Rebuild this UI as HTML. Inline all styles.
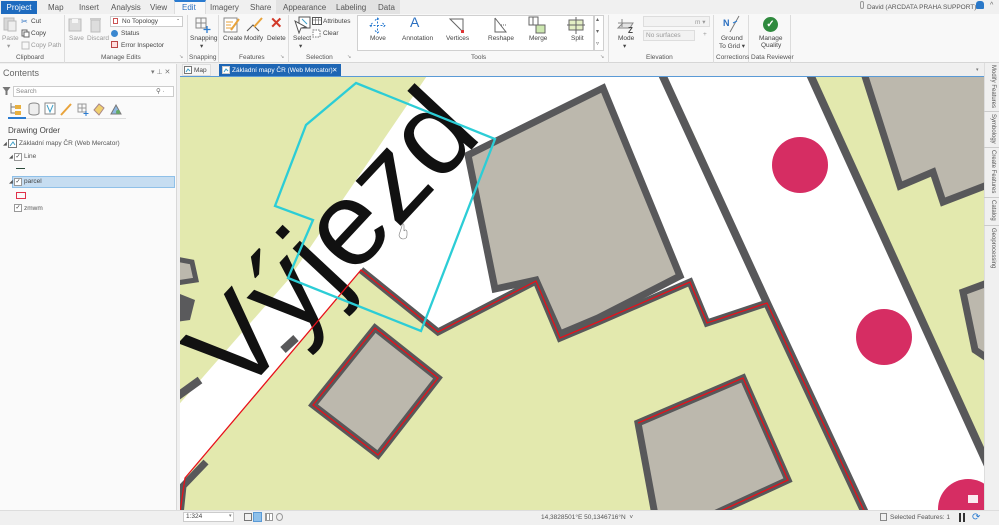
<!DOCTYPE html>
<html><head><meta charset="utf-8">
<style>
*{margin:0;padding:0;box-sizing:border-box}
body{width:999px;height:525px;overflow:hidden;background:#f0f0f0;font-family:"Liberation Sans",sans-serif;position:relative;color:#333}
.a{position:absolute;white-space:nowrap}
.t{font-size:8px;color:#555}
.s{font-size:6.5px;color:#444}
.g{font-size:6.5px;color:#555}
.dis{color:#9a9a9a}
.sep{position:absolute;top:15px;width:1px;height:48px;background:#dcdcdc}
.vt{position:absolute;font-size:6px;color:#555;transform-origin:0 0;transform:rotate(90deg);white-space:nowrap}
</style></head><body>
<div class="a" style="left:0;top:0;width:999px;height:14px;background:#f0f0f0"></div>
<div class="a" style="left:276px;top:0;width:124px;height:14px;background:#e2e2e2"></div>
<div class="a" style="left:1px;top:1px;width:36px;height:13px;background:#1e6bbf;color:#fff;font-size:8px;line-height:13px;text-align:center">Project</div>
<div class="a t" style="left:48px;top:3px">Map</div>
<div class="a t" style="left:79px;top:3px">Insert</div>
<div class="a t" style="left:111px;top:3px">Analysis</div>
<div class="a t" style="left:150px;top:3px">View</div>
<div class="a" style="left:174px;top:0;width:32px;height:15px;background:#f8f8f8;border-top:2px solid #2a7bd0;border-left:1px solid #ddd;border-right:1px solid #ddd"></div>
<div class="a t" style="left:182px;top:3px;color:#2a6fc0">Edit</div>
<div class="a t" style="left:210px;top:3px">Imagery</div>
<div class="a t" style="left:250px;top:3px">Share</div>
<div class="a t" style="left:283px;top:3px">Appearance</div>
<div class="a t" style="left:336px;top:3px">Labeling</div>
<div class="a t" style="left:378px;top:3px">Data</div>
<div class="a" style="left:860px;top:1px;width:4px;height:8px;border:1px solid #999;border-radius:2px"></div>
<div class="a" style="left:867px;top:3px;font-size:6.5px;color:#555">David (ARCDATA PRAHA SUPPORT) ▾</div>
<div class="a" style="left:976px;top:1px;width:8px;height:8px;background:#2a78c8;border-radius:3px 3px 1px 1px"></div>
<div class="a" style="left:990px;top:2px;font-size:7px;color:#666">^</div>
<div class="a" style="left:0;top:14px;width:999px;height:49px;background:#f8f8f8;border-bottom:1px solid #d6d6d6"></div>
<svg class="a" style="left:2px;top:16px" width="16" height="16"><rect x="2" y="2" width="10" height="12" fill="#d8d8d8" stroke="#bbb"/><rect x="6" y="5" width="8" height="10" fill="#eee" stroke="#bbb"/></svg>
<div class="a s dis" style="left:2px;top:35px">Paste</div>
<div class="a s dis" style="left:7px;top:42px">▾</div>
<div class="a" style="left:21px;top:17px;font-size:8px;color:#2a6fc0">✂</div><div class="a s" style="left:31px;top:18px">Cut</div>
<svg class="a" style="left:21px;top:29px" width="9" height="9"><rect x="1" y="1" width="5" height="6" fill="none" stroke="#666"/><rect x="3" y="3" width="5" height="5" fill="#fff" stroke="#666"/></svg><div class="a s" style="left:31px;top:30px">Copy</div>
<svg class="a" style="left:21px;top:41px" width="9" height="9"><rect x="1" y="1" width="7" height="7" fill="none" stroke="#bbb"/></svg><div class="a s dis" style="left:31px;top:42px">Copy Path</div>
<div class="sep" style="left:64px"></div>
<svg class="a" style="left:68px;top:17px" width="16" height="16"><rect x="1" y="2" width="12" height="12" fill="#ddd" stroke="#bbb"/><rect x="4" y="2" width="6" height="4" fill="#f6f6f6"/></svg>
<div class="a s dis" style="left:69px;top:35px">Save</div>
<svg class="a" style="left:89px;top:17px" width="14" height="16"><rect x="2" y="3" width="9" height="12" fill="#ddd" stroke="#bbb"/><rect x="1" y="1" width="11" height="2" fill="#ccc"/></svg>
<div class="a s dis" style="left:87px;top:35px">Discard</div>
<div class="a" style="left:110px;top:16px;width:73px;height:11px;background:#fff;border:1px solid #ccc"></div>
<div class="a" style="left:113px;top:18px;width:5px;height:6px;border:1px solid #c55"></div>
<div class="a s" style="left:122px;top:18px">No Topology</div><div class="a s" style="left:177px;top:16px">-</div>
<div class="a" style="left:111px;top:30px;width:7px;height:7px;border-radius:50%;background:#3a87cf"></div><div class="a s" style="left:121px;top:30px">Status</div>
<div class="a" style="left:111px;top:41px;width:7px;height:7px;border:1px solid #b44;background:#fdd"></div><div class="a s" style="left:121px;top:42px">Error Inspector</div>
<div class="sep" style="left:187px"></div>
<svg class="a" style="left:194px;top:16px" width="18" height="18"><path d="M2 2h10v10H2zM2 7h10M7 2v10" fill="none" stroke="#888"/><path d="M13 10v7M9.5 13.5h7" stroke="#2a7bd0" stroke-width="1.3"/></svg>
<div class="a s" style="left:190px;top:35px">Snapping</div><div class="a s" style="left:200px;top:42px">▾</div>
<div class="sep" style="left:218px"></div>
<svg class="a" style="left:223px;top:16px" width="18" height="18"><rect x="1" y="2" width="13" height="14" fill="#fff" stroke="#888"/><path d="M3 6h7M3 9h5M3 12h7" stroke="#e8a33b"/><path d="M8 14L16 3" stroke="#e8a33b" stroke-width="2"/></svg>
<div class="a s" style="left:223px;top:35px">Create</div>
<svg class="a" style="left:245px;top:16px" width="18" height="18"><path d="M2 15L8 9L14 15" fill="none" stroke="#555"/><path d="M9 11L17 2" stroke="#e8a33b" stroke-width="2"/></svg>
<div class="a s" style="left:244px;top:35px">Modify</div>
<div class="a" style="left:270px;top:14px;font-size:15px;color:#d23a2a;font-weight:bold">✕</div>
<div class="a s" style="left:267px;top:35px">Delete</div>
<div class="sep" style="left:288px"></div>
<svg class="a" style="left:293px;top:16px" width="18" height="18"><rect x="6" y="1" width="11" height="11" fill="#fff" stroke="#555"/><path d="M2 5l4 12 2-5 5-1z" fill="#fff" stroke="#555"/><path d="M9 3l5 5" stroke="#3fa0c8"/></svg>
<div class="a s" style="left:293px;top:35px">Select</div><div class="a s" style="left:299px;top:42px">▾</div>
<svg class="a" style="left:312px;top:17px" width="10" height="9"><rect x="0.5" y="0.5" width="9" height="7" fill="#fff" stroke="#555"/><path d="M1 3h8M3.5 1v7M6.5 1v7" stroke="#555" stroke-width=".6"/></svg>
<div class="a s" style="left:323px;top:18px">Attributes</div>
<svg class="a" style="left:312px;top:29px" width="10" height="9"><rect x="1" y="1" width="7" height="7" fill="#fff" stroke="#777" stroke-dasharray="1.5 1"/></svg>
<div class="a s" style="left:323px;top:30px">Clear</div>
<div class="a" style="left:357px;top:15px;width:237px;height:36px;background:#fff;border:1px solid #d0d0d0"></div>
<div class="a" style="left:594px;top:15px;width:10px;height:36px;background:#fff;border:1px solid #d0d0d0"></div>
<div class="a" style="left:596px;top:16px;font-size:6px;color:#666">▴</div>
<div class="a" style="left:596px;top:28px;font-size:6px;color:#666">▾</div>
<div class="a" style="left:596px;top:40px;font-size:6px;color:#666">▿</div>
<svg class="a" style="left:369px;top:17px" width="17" height="17"><path d="M8.5 1v15M1 8.5h15M6 3.5l2.5-2.5 2.5 2.5M6 13.5l2.5 2.5 2.5-2.5M3.5 6L1 8.5l2.5 2.5M13.5 6l2.5 2.5-2.5 2.5" fill="none" stroke="#2a7bd0" stroke-dasharray="2 1.5"/></svg>
<div class="a s" style="left:370px;top:35px">Move</div>
<div class="a" style="left:410px;top:14px;font-size:14px;color:#2a6fc0">A</div>
<div class="a s" style="left:402px;top:35px">Annotation</div>
<svg class="a" style="left:448px;top:17px" width="17" height="17"><path d="M2 2h13L15 15L2 2z" fill="none" stroke="#666"/><rect x="13" y="13" width="3" height="3" fill="#d33"/></svg>
<div class="a s" style="left:446px;top:35px">Vertices</div>
<svg class="a" style="left:492px;top:17px" width="17" height="17"><path d="M3 1v14h11L3 1" fill="none" stroke="#666"/><path d="M9 8l5 0" stroke="#666" stroke-dasharray="1 1"/></svg>
<div class="a s" style="left:488px;top:35px">Reshape</div>
<svg class="a" style="left:528px;top:16px" width="18" height="18"><rect x="1" y="1" width="9" height="8" fill="#fff" stroke="#666"/><path d="M5 1v8" stroke="#666"/><rect x="8" y="9" width="9" height="8" fill="#cde8b0" stroke="#666"/></svg>
<div class="a s" style="left:529px;top:35px">Merge</div>
<svg class="a" style="left:567px;top:16px" width="18" height="18"><rect x="2" y="4" width="14" height="10" fill="#e4efc4" stroke="#666"/><path d="M9 1v17M0 9h18" stroke="#666"/></svg>
<div class="a s" style="left:571px;top:35px">Split</div>
<div class="a g" style="left:471px;top:54px">Tools</div>
<div class="sep" style="left:608px"></div>
<svg class="a" style="left:616px;top:16px" width="20" height="18"><path d="M2 12l5-5h10l-3 5z" fill="#e4e4e4" stroke="#888"/><path d="M6 3v8M2 7h8" stroke="#888"/><text x="12" y="17" font-size="8" font-weight="bold" fill="#444" font-family="Liberation Sans">Z</text></svg>
<div class="a s" style="left:618px;top:35px">Mode</div><div class="a s" style="left:623px;top:42px">▾</div>
<div class="a" style="left:643px;top:16px;width:67px;height:11px;background:#f2f2f2;border:1px solid #ddd"></div>
<div class="a s dis" style="left:695px;top:18px">m ▾</div>
<div class="a" style="left:643px;top:30px;width:52px;height:11px;background:#f2f2f2;border:1px solid #ddd"></div>
<div class="a s dis" style="left:646px;top:32px">No surfaces</div>
<div class="a s dis" style="left:703px;top:31px">+</div>
<div class="sep" style="left:713px"></div>
<div class="a" style="left:723px;top:18px;font-size:9px;font-weight:bold;color:#2a6fc0">N</div>
<svg class="a" style="left:729px;top:15px" width="12" height="18"><path d="M1 17L10 1" stroke="#777"/><path d="M4 8l4-2" stroke="#2a7bd0"/></svg>
<div class="a s" style="left:721px;top:35px">Ground</div>
<div class="a s" style="left:719px;top:42px">To Grid ▾</div>
<div class="sep" style="left:748px"></div>
<div class="a" style="left:763px;top:17px;width:15px;height:15px;border-radius:50%;background:#2f8a3e;color:#fff;font-size:10px;line-height:15px;text-align:center;font-weight:bold">✓</div>
<div class="a s" style="left:759px;top:35px">Manage</div>
<div class="a s" style="left:761px;top:42px">Quality</div>
<div class="sep" style="left:790px"></div>
<div class="a g" style="left:16px;top:54px">Clipboard</div>
<div class="a g" style="left:101px;top:54px">Manage Edits</div>
<div class="a" style="left:179px;top:54px;font-size:5px;color:#888">↘</div>
<div class="a g" style="left:189px;top:54px">Snapping</div>
<div class="a g" style="left:239px;top:54px">Features</div>
<div class="a" style="left:280px;top:54px;font-size:5px;color:#888">↘</div>
<div class="a g" style="left:306px;top:54px">Selection</div>
<div class="a" style="left:347px;top:54px;font-size:5px;color:#888">↘</div>
<div class="a" style="left:600px;top:54px;font-size:5px;color:#888">↘</div>
<div class="a g" style="left:646px;top:54px">Elevation</div>
<div class="a g" style="left:716px;top:54px">Corrections</div>
<div class="a g" style="left:751px;top:54px">Data Reviewer</div>
<div class="a" style="left:0;top:64px;width:177px;height:446px;background:#fafafa;border-right:1px solid #d8d8d8"></div>
<div class="a" style="left:3px;top:68px;font-size:9px;color:#666">Contents</div>
<div class="a" style="left:151px;top:68px;font-size:7px;color:#777">▾ ⊥ ✕</div>
<svg class="a" style="left:2px;top:86px" width="9" height="10"><path d="M0.5 1h8L5.5 5v4H3.5V5z" fill="#777"/></svg>
<div class="a" style="left:13px;top:86px;width:161px;height:11px;background:#fff;border:1px solid #ccc"></div>
<div class="a s" style="left:16px;top:88px;color:#888">Search</div>
<div class="a s" style="left:156px;top:87px;color:#666">⚲ ·</div>
<svg class="a" style="left:8px;top:101px" width="120" height="16">
<path d="M3 2v10h4M3 6h4" fill="none" stroke="#777"/><rect x="7" y="4" width="6" height="4" fill="#e8b040"/><rect x="7" y="10" width="6" height="4" fill="#e8b040"/>
<ellipse cx="26" cy="4" rx="5" ry="2" fill="#eee" stroke="#888"/><path d="M21 4v8a5 2 0 0 0 10 0V4" fill="#eee" stroke="#888"/>
<rect x="37" y="2" width="10" height="11" fill="#fff" stroke="#888"/><path d="M39 4l3 7 3-7" fill="none" stroke="#3fa0c8"/>
<path d="M53 14L63 3" stroke="#e8a33b" stroke-width="2"/>
<path d="M70 3h8v8h-8zM74 3v8M70 7h8" fill="none" stroke="#999"/><path d="M78 10v5M75.5 12.5h5" stroke="#2a7bd0"/>
<path d="M86 9l5-6 5 4-5 7z" fill="#f0d070" stroke="#a88"/>
<path d="M103 13l5-9 5 9z" fill="#8fb8e0" stroke="#777"/><circle cx="110" cy="11" r="2" fill="#6a6"/>
</svg>
<div class="a" style="left:8px;top:117px;width:18px;height:2px;background:#2a7bd0"></div>
<div class="a" style="left:26px;top:118px;width:100px;height:1px;background:#ddd"></div>
<div class="a" style="left:8px;top:126px;font-size:8px;color:#444">Drawing Order</div>
<div class="a" style="left:3px;top:141px;font-size:5px;color:#555">◢</div>
<svg class="a" style="left:8px;top:139px" width="9" height="9"><rect x="0.5" y="0.5" width="8" height="8" fill="#fff" stroke="#777"/><path d="M2 7l3-4 2 3" fill="none" stroke="#3fa0c8"/></svg>
<div class="a s" style="left:19px;top:140px;color:#555">Základní mapy ČR (Web Mercator)</div>
<div class="a" style="left:9px;top:154px;font-size:5px;color:#555">◢</div>
<div class="a" style="left:14px;top:153px;width:8px;height:8px;border:1px solid #999;background:#fff;font-size:6px;line-height:7px;text-align:center;color:#333">✓</div>
<div class="a s" style="left:24px;top:153px;color:#555">Line</div>
<div class="a" style="left:16px;top:168px;width:9px;height:1px;background:#2c4a3a"></div>
<div class="a" style="left:12px;top:176px;width:163px;height:12px;background:#c6ddf1;border:1px solid #8fc0e8"></div>
<div class="a" style="left:9px;top:179px;font-size:5px;color:#555">◢</div>
<div class="a" style="left:14px;top:178px;width:8px;height:8px;border:1px solid #999;background:#fff;font-size:6px;line-height:7px;text-align:center;color:#333">✓</div>
<div class="a s" style="left:24px;top:178px;color:#444">parcel</div>
<div class="a" style="left:16px;top:192px;width:10px;height:7px;border:1px solid #e0304a"></div>
<div class="a" style="left:14px;top:204px;width:8px;height:8px;border:1px solid #999;background:#fff;font-size:6px;line-height:7px;text-align:center;color:#333">✓</div>
<div class="a s" style="left:24px;top:205px;color:#555">zmwm</div>
<div class="a" style="left:180px;top:64px;width:804px;height:12px;background:#efefef"></div>
<div class="a" style="left:182px;top:64px;width:29px;height:12px;background:#f6f6f6;border:1px solid #ddd"></div>
<svg class="a" style="left:184px;top:66px" width="8" height="8"><rect x="0.5" y="0.5" width="7" height="7" fill="#fff" stroke="#777"/><path d="M2 6l2-3 2 2" fill="none" stroke="#3fa0c8"/></svg>
<div class="a s" style="left:194px;top:67px;color:#444">Map</div>
<div class="a" style="left:219px;top:64px;width:122px;height:12px;background:#1e66b4"></div>
<svg class="a" style="left:222px;top:66px" width="8" height="8"><rect x="0.5" y="0.5" width="7" height="7" fill="#fff" stroke="#ccc"/><path d="M2 6l2-3 2 2" fill="none" stroke="#3fa0c8"/></svg>
<div class="a s" style="left:232px;top:67px;color:#fff">Základní mapy ČR (Web Mercator)</div>
<div class="a s" style="left:332px;top:66px;color:#fff">✕</div>
<div class="a" style="left:976px;top:67px;font-size:5px;color:#777">▾</div>
<div class="a" style="left:180px;top:76px;width:804px;height:1px;background:#5a9ad6"></div>
<svg class="a" style="left:0;top:0" width="999" height="525" viewBox="0 0 999 525">
<defs><clipPath id="c"><rect x="180" y="77" width="804" height="433"/></clipPath></defs>
<g clip-path="url(#c)">
<rect x="180" y="77" width="804" height="433" fill="#e3e9ae"/>
<path d="M175 409L288 280L431 70L666 70L767 303L707 323L690 282L598 322L560 338L536 281L438 332L361 270L185 478L180 515L175 515Z" fill="#ffffff"/>
<path d="M665 70L805 70L990 470L990 515L866 515Z" fill="#ffffff"/>
<path d="M170 258L192 262L196 280L170 284Z" fill="#bcb8ad" stroke="#58585a" stroke-width="5"/>
<path d="M175 292L195 300L190 320L175 322Z" fill="#5a5a5c"/>
<path d="M175 398L200 380" stroke="#58585a" stroke-width="8"/>
<path d="M660 70L767 303L866 515" fill="none" stroke="#58585a" stroke-width="8"/>
<path d="M808 70L990 470" fill="none" stroke="#58585a" stroke-width="8"/>
<path d="M468 155L603 88L680 276L598 318L560 334L536 280L495 289Z" fill="#bcb8ad" stroke="#58585a" stroke-width="7"/>
<path d="M863 70L900 186L933 172L943 202L990 184L990 70Z" fill="#bcb8ad" stroke="#58585a" stroke-width="7"/>
<path d="M963 292L990 282L990 360L975 350Z" fill="#bcb8ad" stroke="#58585a" stroke-width="7"/>
<path d="M313 405L375 328L438 378L378 455Z" fill="#bcb8ad" stroke="#58585a" stroke-width="7"/>
<path d="M638 423L743 378L788 480L712 515L655 515Z" fill="#bcb8ad" stroke="#58585a" stroke-width="7"/>
<path d="M361 270L438 332L536 281L560 338L598 322L690 282L707 323L767 303" fill="none" stroke="#58585a" stroke-width="7"/>
<path d="M180 515L183 486L206 462" fill="none" stroke="#58585a" stroke-width="7"/>
<path d="M283 350L296 338" stroke="#58585a" stroke-width="8"/>
<circle cx="800" cy="165" r="28" fill="#d62d63"/>
<circle cx="884" cy="337" r="28" fill="#d62d63"/>
<circle cx="968" cy="509" r="30" fill="#d62d63"/>
<text x="238" y="400" transform="rotate(-47 238 400)" font-family="Liberation Sans" font-size="120" fill="#111">Výjezd</text>
<g fill="none" stroke="#e8101a" stroke-width="1.3">
<path d="M180 512L185 478L361 270L438 332L536 281L560 338L598 322L690 282L707 323L767 303L866 515"/>
<path d="M313 405L375 328L438 378L378 455Z"/>
<path d="M638 423L743 378L788 480L712 515"/>
</g>
<path d="M356 83L306 125L275 206L313 220L288 278L421 331L495 139Z" fill="none" stroke="#2ccdd6" stroke-width="2.3"/>
<path d="M402 226c0 -3 2 -3 2 0v5c1-2 3-1 3 1v3c0 3-2 4-4 4-2 0-4-2-4-4z" fill="#fff" stroke="#777" stroke-width=".6"/>
<rect x="968" y="495" width="10" height="8" fill="#fff" opacity=".9"/>
</g>
</svg>
<div class="a" style="left:984px;top:63px;width:15px;height:447px;background:#f0f0f0;border-left:1px solid #ddd"></div>
<div class="vt" style="left:996px;top:65px">Modify Features</div>
<div class="vt" style="left:996px;top:114px">Symbology</div>
<div class="vt" style="left:996px;top:150px">Create Features</div>
<div class="vt" style="left:996px;top:200px">Catalog</div>
<div class="vt" style="left:996px;top:228px">Geoprocessing</div>
<div class="a" style="left:984px;top:111px;width:15px;height:1px;background:#ccc"></div>
<div class="a" style="left:984px;top:147px;width:15px;height:1px;background:#ccc"></div>
<div class="a" style="left:984px;top:197px;width:15px;height:1px;background:#ccc"></div>
<div class="a" style="left:984px;top:225px;width:15px;height:1px;background:#ccc"></div>
<div class="a" style="left:0;top:510px;width:999px;height:15px;background:#f0f0f0;border-top:1px solid #ddd"></div>
<div class="a" style="left:183px;top:512px;width:51px;height:10px;background:#fff;border:1px solid #ccc"></div>
<div class="a s" style="left:186px;top:513px">1:324</div>
<div class="a" style="left:229px;top:513px;font-size:5px;color:#777">▾</div>
<div class="a" style="left:244px;top:513px;width:8px;height:8px;border:1px solid #777"></div>
<div class="a" style="left:253px;top:512px;width:9px;height:10px;background:#8ec0ea;border:1px solid #5a9ad6"></div>
<div class="a" style="left:265px;top:513px;width:8px;height:8px;border:1px solid #999;background:repeating-linear-gradient(90deg,#999 0 1px,#fff 1px 3px)"></div>
<div class="a" style="left:276px;top:513px;width:7px;height:8px;border-radius:50%;border:1px solid #999"></div>
<div class="a s" style="left:541px;top:514px;color:#555">14,3828501°E 50,1346716°N &nbsp;˅</div>
<div class="a" style="left:880px;top:513px;width:7px;height:8px;border:1px solid #888"></div>
<div class="a s" style="left:890px;top:514px;color:#555">Selected Features: 1</div>
<div class="a" style="left:959px;top:513px;width:2px;height:9px;background:#333"></div>
<div class="a" style="left:963px;top:513px;width:2px;height:9px;background:#333"></div>
<div class="a" style="left:972px;top:512px;font-size:10px;color:#2a7bd0">⟳</div>
</body></html>
